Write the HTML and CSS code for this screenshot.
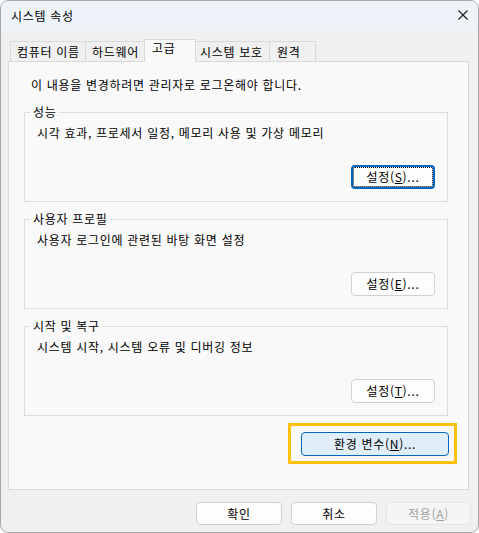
FILE: index.html
```html
<!DOCTYPE html>
<html lang="ko">
<head>
<meta charset="utf-8">
<title>시스템 속성</title>
<link rel="stylesheet" href="styles.css">
</head>
<body>
<div class="window">
  <div class="titlebar">
    <span class="title">시스템 속성</span>
    <svg class="close" width="10" height="10" viewBox="0 0 10 10"><path d="M0.5 0.5 L9.5 9.5 M9.5 0.5 L0.5 9.5" stroke="#1a1a1a" stroke-width="1.1" fill="none"/></svg>
  </div>
  <div class="tabs">
    <div class="tab tab-1">컴퓨터 이름</div>
    <div class="tab tab-2">하드웨어</div>
    <div class="tab tab-3 tab-active">고급</div>
    <div class="tab tab-4">시스템 보호</div>
    <div class="tab tab-5">원격</div>
  </div>
  <div class="panel">
    <p class="note">이 내용을 변경하려면 관리자로 로그온해야 합니다.</p>
    <div class="group">
      <div class="group-title">성능</div>
      <div class="group-text">시각 효과, 프로세서 일정, 메모리 사용 및 가상 메모리</div>
      <div class="group-actions"><button class="btn btn-settings btn-focus">설정(<u>S</u>)...</button></div>
    </div>
    <div class="group group-next">
      <div class="group-title">사용자 프로필</div>
      <div class="group-text">사용자 로그인에 관련된 바탕 화면 설정</div>
      <div class="group-actions"><button class="btn btn-settings">설정(<u>E</u>)...</button></div>
    </div>
    <div class="group group-next">
      <div class="group-title">시작 및 복구</div>
      <div class="group-text">시스템 시작, 시스템 오류 및 디버깅 정보</div>
      <div class="group-actions"><button class="btn btn-settings">설정(<u>T</u>)...</button></div>
    </div>
    <div class="env-row">
      <div class="highlight"><button class="btn btn-primary">환경 변수(<u>N</u>)...</button></div>
    </div>
  </div>
  <div class="footer">
    <button class="btn btn-footer">확인</button>
    <button class="btn btn-footer">취소</button>
    <button class="btn btn-footer btn-disabled">적용(<u>A</u>)</button>
  </div>
</div>
</body>
</html>
```
FILE: styles.css
```css
body {
  margin: 0;
  background: #ffffff;
  font-family: "Noto Sans CJK KR", "Noto Sans", sans-serif;
  font-size: 12px;
  letter-spacing: 0.7px;
  color: #000;
}
.window {
  width: 479px;
  height: 533px;
  box-sizing: border-box;
  border: 1px solid #a8a8a8;
  border-radius: 8px;
  background: #f0f0f0;
  overflow: hidden;
}
.titlebar {
  height: 30px;
  background: #eef3f9;
  display: flex;
  align-items: center;
  justify-content: space-between;
  padding-left: 10px;
}
.title {
  line-height: 16px;
  margin-top: -1px;
}
.close {
  margin-right: 10px;
  margin-top: -2px;
}
.tabs {
  display: flex;
  align-items: flex-end;
  height: 23px;
  margin: 8px 0 0 9px;
  position: relative;
  z-index: 1;
}
.tab {
  height: 21px;
  box-sizing: border-box;
  border: 1px solid #d9d9d9;
  background: #f0f0f0;
  line-height: 19px;
  padding-left: 6px;
  margin-right: -1px;
  white-space: nowrap;
}
.tab-1 { width: 76px; }
.tab-2 { width: 60px; }
.tab-3 { width: 52px; padding-left: 7px; }
.tab-4 { width: 75px; padding-left: 4px; }
.tab-5 { width: 47px; padding-left: 7px; }
.tab-active {
  height: 23px;
  background: #f9f9f9;
  border-bottom: none;
  line-height: 16px;
  position: relative;
  z-index: 2;
}
.panel {
  margin: -1px 0 0 7px;
  width: 461px;
  height: 429px;
  box-sizing: border-box;
  border: 1px solid #d9d9d9;
  background: #f9f9f9;
  padding-top: 15px;
}
.note {
  margin: 0 0 0 22px;
  line-height: 16px;
}
.group {
  margin: 19px 0 0 15px;
  width: 424px;
  height: 90px;
  box-sizing: border-box;
  border: 1px solid #dcdcdc;
}
.group-next {
  margin-top: 17px;
}
.group-title {
  width: fit-content;
  margin: -9px 0 0 5px;
  padding: 0 3px;
  background: #f9f9f9;
  line-height: 16px;
}
.group-text {
  margin: 5px 0 0 12px;
  line-height: 16px;
}
.group-actions {
  display: flex;
  justify-content: flex-end;
  margin-top: 24px;
  padding-right: 12px;
}
.btn {
  font-family: inherit;
  font-size: 12px;
  letter-spacing: inherit;
  color: #000;
  height: 24px;
  box-sizing: border-box;
  border: 1px solid #d0d0d0;
  border-radius: 4px;
  background: #fdfdfd;
  padding: 0;
  line-height: 20px;
}
.btn u {
  text-underline-offset: 1px;
}
.btn-settings {
  width: 84px;
}
.btn-focus {
  border: 2px solid #0067c0;
  outline: 1px dotted #000;
  outline-offset: -3px;
}
.env-row {
  display: flex;
  justify-content: flex-end;
  margin: 7px 11px 0 0;
}
.highlight {
  border: 3px solid #ffc107;
  padding: 6px 5px 5px 10px;
}
.btn-primary {
  width: 148px;
  background: #e0eef9;
  border-color: #0067c0;
}
.footer {
  display: flex;
  justify-content: flex-end;
  gap: 9px;
  margin: 12px 7px 0 0;
}
.btn-footer {
  width: 86px;
  height: 23px;
}
.btn-disabled {
  width: 85px;
  color: #a0a0a0;
  background: #f5f5f5;
  border-color: #e5e5e5;
}
```
